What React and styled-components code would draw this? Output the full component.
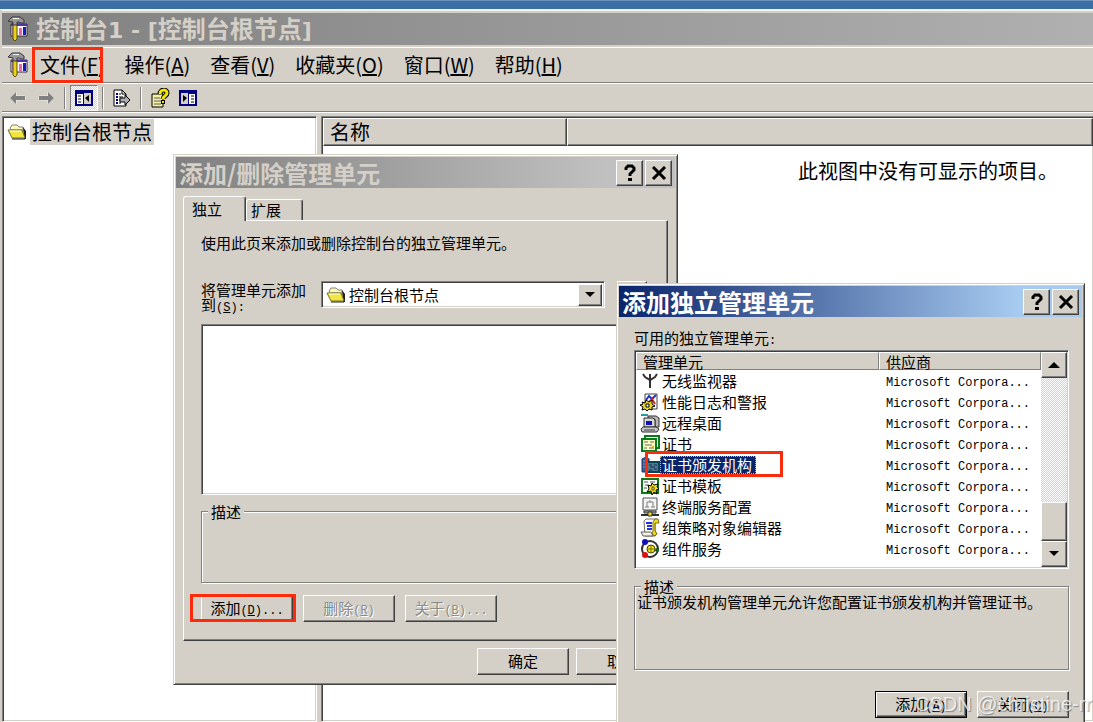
import React, { useState } from "react";
import styled, { createGlobalStyle, css } from "styled-components";

const face = "#d4d0c8";

const GlobalStyle = createGlobalStyle`
  * {
    box-sizing: border-box;
  }

  body {
    margin: 0;
    overflow: hidden;
    color: #000;
    font-family: "Noto Sans CJK SC", sans-serif;
    font-size: 15px;
  }

  button,
  select {
    font-family: inherit;
    color: inherit;
  }
`;

const raised = css`
  border: 1px solid;
  border-color: #fff #404040 #404040 #fff;
  box-shadow: inset -1px -1px #808080;
`;

const sunken = css`
  border: 1px solid;
  border-color: #808080 #fff #fff #808080;
  box-shadow: inset 1px 1px #404040, inset -1px -1px ${face};
`;

const Desktop = styled.div`
  position: relative;
  height: 100vh;
  padding-top: 8px;
  overflow: hidden;
  background: #3a6ea5;
  border-top: 1px solid #6d93bd;
`;

const ConsoleWindow = styled.main`
  display: flex;
  flex-direction: column;
  height: 100%;
  padding-top: 2px;
  background: ${face};
  border-top: 2px solid #f4f2ee;
  border-left: 2px solid ${face};
`;

const ConsoleTitle = styled.header`
  display: flex;
  align-items: center;
  gap: 8px;
  height: 32px;
  padding-left: 6px;
  color: ${face};
  background: linear-gradient(to right, #808080, #b0b0b0);
`;

const TitleText = styled.h1`
  margin: 0;
  font-size: 24px;
  line-height: 30px;
  font-weight: bold;
  white-space: nowrap;
`;

const TitleLatin = styled.span`
  font-family: "DejaVu Sans", sans-serif;
  font-size: 22px;
`;

const MenuBar = styled.nav`
  display: flex;
  align-items: center;
  height: 36px;
  margin-top: 2px;
  padding-left: 6px;
  border-top: 1px solid #fff;
  border-bottom: 1px solid #808080;
`;

const MenuItems = styled.div`
  display: flex;
  padding-left: 2px;
`;

const MenuButton = styled.button`
  position: relative;
  padding: 0 10px;
  border: 0;
  background: none;
  font-size: 20px;
  line-height: 30px;
  white-space: nowrap;
`;

const Marker = styled.span`
  position: absolute;
  inset: ${(props) => props.$inset || "-1px"};
  border: 3px solid #fb2c0c;
  pointer-events: none;
`;

const Toolbar = styled.div`
  display: flex;
  align-items: center;
  height: 29px;
  padding-left: 2px;
  border-top: 1px solid #fff;
  border-bottom: 1px solid #808080;
`;

const ToolButton = styled.button`
  display: flex;
  align-items: center;
  justify-content: center;
  width: 28px;
  height: 26px;
  padding: 0;
  border: 1px solid transparent;
  background: none;

  ${(props) =>
    props.$pressed &&
    css`
      border-color: #808080 #fff #fff #808080;
      background: repeating-conic-gradient(#fff 0 25%, ${face} 0 50%) 0 0 / 2px 2px;
    `}
`;

const ToolDivider = styled.span`
  width: 2px;
  height: 22px;
  margin: 0 4px;
  border-left: 1px solid #808080;
  border-right: 1px solid #fff;
`;

const Panes = styled.div`
  display: flex;
  flex: 1;
  gap: 4px;
  padding-top: 3px;
  border-top: 1px solid #fff;
`;

const TreePane = styled.aside`
  ${sunken}
  width: 315px;
  flex-shrink: 0;
  padding: 2px 4px;
  background: #fff;
`;

const TreeItem = styled.button`
  display: flex;
  align-items: center;
  gap: 3px;
  padding: 0;
  border: 0;
  background: none;
  font-size: 20px;
  line-height: 26px;
`;

const TreeLabel = styled.span`
  padding: 0 2px;
  background: ${face};
`;

const ResultPane = styled.section`
  ${sunken}
  flex: 1;
  border-right: 0;
  padding: 1px 0 0 1px;
  background: #fff;
`;

const ResultHeader = styled.div`
  display: flex;
  height: 28px;
  font-size: 20px;
  line-height: 26px;
`;

const ResultColumn = styled.div`
  ${raised}
  width: ${(props) => props.$width || "auto"};
  flex: ${(props) => (props.$width ? "none" : 1)};
  padding-left: 6px;
  background: ${face};
`;

const EmptyText = styled.p`
  margin: 10px 35px 0 0;
  text-align: right;
  font-size: 20px;
  line-height: 30px;
`;

const DialogFrame = styled.section`
  position: absolute;
  left: ${(props) => props.$x}px;
  top: ${(props) => props.$y}px;
  width: ${(props) => props.$width}px;
  padding: 2px;
  background: ${face};
  border: 1px solid;
  border-color: ${face} #404040 #404040 ${face};
  box-shadow: inset 1px 1px #fff, inset -1px -1px #808080;
  line-height: 16px;
`;

const DialogTitle = styled.header`
  display: flex;
  align-items: center;
  gap: 2px;
  height: 31px;
  padding: 0 3px;
  color: ${(props) => (props.$active ? "#fff" : face)};
  background: ${(props) =>
    props.$active
      ? "linear-gradient(to right, #0a246a, #a6caf0 86%)"
      : "linear-gradient(to right, #808080, #c0c0c0 86%)"};

  ${TitleText} {
    flex: 1;
  }
`;

const CaptionButton = styled.button`
  ${raised}
  display: flex;
  align-items: center;
  justify-content: center;
  width: 27px;
  height: 26px;
  padding: 0;
  background: ${face};
  color: #000;
`;

const SnapinBody = styled.div`
  padding: 8px 7px 7px;
`;

const Tabs = styled.div`
  display: flex;
  align-items: flex-end;
`;

const Tab = styled.button`
  position: relative;
  height: ${(props) => (props.$active ? 25 : 21)}px;
  width: ${(props) => (props.$active ? 63 : 57)}px;
  margin-bottom: ${(props) => (props.$active ? -1 : 0)}px;
  z-index: ${(props) => (props.$active ? 1 : 0)};
  padding: 0 0 0 ${(props) => (props.$active ? 8 : 4)}px;
  border: 1px solid;
  border-color: #fff #404040 transparent #fff;
  border-bottom: 0;
  border-radius: 3px 3px 0 0;
  box-shadow: inset -1px 0 #808080;
  background: ${face};
  font-size: 15px;
  line-height: 20px;
  text-align: left;
`;

const Sheet = styled.div`
  ${raised}
  padding: 14px 12px 18px 17px;
`;

const Paragraph = styled.p`
  margin: 0;
  white-space: nowrap;
`;

const ParentRow = styled.div`
  display: flex;
  height: 27px;
  margin: 30px 0 16px;
`;

const ParentLabel = styled.label`
  width: 120px;
  padding-top: 1px;
  font-size: 15px;
  line-height: 15px;
`;

const SelectBox = styled.div`
  ${sunken}
  display: flex;
  align-items: center;
  width: 284px;
  height: 27px;
  padding: 2px 2px 2px 4px;
  background: #fff;
`;

const SelectInput = styled.select`
  flex: 1;
  min-width: 0;
  padding: 0 0 0 3px;
  border: 0;
  outline: 0;
  appearance: none;
  background: none;
  font-size: 15px;
  line-height: 20px;
`;

const SmallButton = styled.button`
  ${raised}
  display: flex;
  align-items: center;
  justify-content: center;
  flex-shrink: 0;
  width: ${(props) => props.$width || 24}px;
  height: ${(props) => props.$height || 22}px;
  padding: 0;
  background: ${face};
`;

const UpButton = styled(SmallButton)`
  margin-left: 12px;
`;

const EmptyList = styled.div`
  ${sunken}
  height: 171px;
  background: #fff;
`;

const Group = styled.fieldset`
  min-width: 0;
  height: ${(props) => props.$height}px;
  margin: ${(props) => props.$top}px 0 0;
  padding: 0 2px;
  border: 1px solid #808080;
  box-shadow: inset 1px 1px #fff, 1px 1px #fff;
`;

const GroupLegend = styled.legend`
  margin-left: 4px;
  padding: 0 3px;
  background: ${face};
  line-height: 15px;
`;

const ButtonRow = styled.div`
  display: flex;
  justify-content: ${(props) => props.$align || "flex-start"};
  gap: ${(props) => props.$gap || 10}px;
  margin-top: ${(props) => props.$top}px;
`;

const PushButton = styled.button`
  ${raised}
  position: relative;
  width: 92px;
  height: 27px;
  padding: 0 0 2px;
  background: ${face};
  font-size: 15px;
  line-height: 22px;
  white-space: nowrap;

  &:disabled {
    color: #8a8a86;
    text-shadow: 1px 1px #fff;
  }

  ${(props) =>
    props.$default &&
    css`
      border-color: #000;
      box-shadow: inset 1px 1px #fff, inset -1px -1px #404040,
        inset -2px -2px #808080;
    `}
`;

const Mono = styled.span`
  font-family: "Liberation Mono", monospace;
  font-size: 12px;
  line-height: 1;
`;

const AddBody = styled.div`
  padding: 13px 13px 12px 15px;
`;

const ListBox = styled.div`
  ${sunken}
  display: flex;
  height: 219px;
  margin-top: 3px;
  padding: 1px;
  background: #fff;
`;

const SnapinTable = styled.table`
  flex: 1;
  align-self: flex-start;
  border-collapse: separate;
  border-spacing: 0;
  table-layout: fixed;
`;

const HeadCell = styled.th`
  width: ${(props) => props.$width || "auto"};
  height: 18px;
  padding: 0 0 0 6px;
  border: 1px solid;
  border-color: #fff #808080 #808080 #fff;
  background: ${face};
  font-weight: normal;
  line-height: 15px;
  text-align: left;
`;

const NameCell = styled.td`
  height: 21px;
  padding: 0 0 0 4px;
`;

const VendorCell = styled.td`
  padding: 0 0 0 7px;
  white-space: nowrap;
`;

const SnapinName = styled.div`
  position: relative;
  display: flex;
  align-items: center;
  width: 142px;
  height: 20px;
  white-space: nowrap;

  svg {
    flex-shrink: 0;
  }
`;

const SnapinLabel = styled.span`
  padding: 0 4px 0 2px;
  line-height: 18px;

  ${(props) =>
    props.$selected &&
    css`
      color: #fff;
      background: #0a246a;
      outline: 1px dotted #d8b060;
      outline-offset: -1px;
    `}
`;

const Scrollbar = styled.div`
  display: flex;
  flex-direction: column;
  width: 26px;
  background: repeating-conic-gradient(#fff 0 25%, ${face} 0 50%) 0 0 / 2px 2px;
`;

const Track = styled.div`
  flex: 1;
`;

const Thumb = styled.div`
  ${raised}
  height: 39px;
  background: ${face};
`;

const Watermark = styled.div`
  position: absolute;
  right: 1px;
  bottom: 4px;
  color: rgba(255, 255, 255, 0.75);
  font-family: "Liberation Sans", sans-serif;
  font-size: 20px;
  line-height: 28px;
  text-shadow: 1px 1px 1px rgba(90, 90, 90, 0.6);
  white-space: nowrap;
  pointer-events: none;
`;

function ConsoleIcon() {
  return (
    <svg width="20" height="26" viewBox="0 0 20 26" aria-hidden="true">
      <path d="M3 8h16v12H3z" fill="#fff" stroke="#303030" />
      <path d="M3 8h16v2H3z" fill="#5030a8" />
      <path d="M3 10h2v9H3z" fill="#b080e0" />
      <path d="M11 12h3v7h-3z" fill="#f060b0" />
      <path d="M15 11h3v8h-3z" fill="#1818c0" />
      <path d="M5 8h4v15l-2 2-2-2z" fill="#e8d420" stroke="#5a5000" />
      <path d="M4 1h8l4 3v3h-3l-2-1H9v3H5V6L0 5z" fill="#989898" stroke="#383838" />
      <path d="M5 2h6v1H5z" fill="#fff" />
    </svg>
  );
}

function FolderIcon() {
  return (
    <svg width="20" height="18" viewBox="0 0 20 18" aria-hidden="true">
      <path d="M3 5l2-3h5l2 2h4v3H4z" fill="#fff8b0" stroke="#808080" />
      <path d="M16 4l3 4v8h-2z" fill="#202020" />
      <path d="M1 7h14l3 8H5z" fill="#f2e63c" stroke="#707030" />
      <path d="M3 8h11" stroke="#fff" />
      <path d="M5 16h13" stroke="#202020" />
    </svg>
  );
}

function ArrowIcon({ flip }) {
  return (
    <svg width="18" height="14" viewBox="0 0 18 14" aria-hidden="true">
      <path
        d="M1 7l6-6v4h9v4H7v4z"
        fill="#808080"
        stroke="#f0eee8"
        strokeWidth="1"
        paintOrder="stroke"
        transform={flip ? "translate(18 0) scale(-1 1)" : undefined}
      />
    </svg>
  );
}

function TreePanelIcon({ flip }) {
  return (
    <svg width="18" height="16" viewBox="0 0 18 16" aria-hidden="true">
      <g transform={flip ? "translate(18 0) scale(-1 1)" : undefined}>
        <path d="M1 1h16v14H1z" fill="#fff" stroke="#000080" strokeWidth="2" />
        <path d="M1 1h16v3H1z" fill="#000080" />
        <path d="M9 3h7v11H9z" fill="#d4d0c8" />
        <path d="M8 3h1v11H8z" fill="#000080" />
        <path d="M3 6h3M3 9h3M3 12h3" stroke="#000" />
        <path d="M14 5v7l-4-4z" fill="#000" />
      </g>
    </svg>
  );
}

function ExportIcon() {
  return (
    <svg width="20" height="20" viewBox="0 0 20 20" aria-hidden="true">
      <path d="M2 2h8l4 4v12H2z" fill="#fff" stroke="#000" />
      <path d="M10 2v4h4" fill="none" stroke="#000" />
      <path d="M4 6h2M4 9h2M4 12h2M4 15h2" stroke="#000080" strokeWidth="2" />
      <path d="M7 6h2M7 9h4M7 12h2M7 15h2" stroke="#000" />
      <path d="M8 10h5V7l5 5-5 5v-3H8z" fill="#b0b0b0" stroke="#000" />
    </svg>
  );
}

function HelpIcon() {
  return (
    <svg width="20" height="20" viewBox="0 0 20 20" aria-hidden="true">
      <path d="M2 6h11v13H2z" fill="#f4f0a0" stroke="#000" />
      <path d="M4 10h6M4 13h7M4 16h7" stroke="#606060" />
      <path d="M10 6c0-5 7-5 7-1 0 3-4 3-4 6" fill="none" stroke="#000" strokeWidth="5" />
      <path d="M11 12h4v4h-4z" fill="#000" />
      <path d="M10 6c0-5 7-5 7-1 0 3-4 3-4 6" fill="none" stroke="#f4e400" strokeWidth="3" />
      <path d="M12 13h2v2h-2z" fill="#f4e400" />
    </svg>
  );
}

function QuestionIcon() {
  return (
    <svg width="14" height="18" viewBox="0 0 14 18" aria-hidden="true">
      <path d="M3 6V4l2-2h4l2 2v2L7 10v2" fill="none" stroke="#000" strokeWidth="3" />
      <path d="M5 14h4v3H5z" fill="#000" />
    </svg>
  );
}

function CloseIcon() {
  return (
    <svg width="16" height="14" viewBox="0 0 16 14" aria-hidden="true">
      <path d="M2 1l12 12M14 1L2 13" stroke="#000" strokeWidth="3" />
    </svg>
  );
}

function Caret({ up }) {
  return (
    <svg width="12" height="6" viewBox="0 0 12 6" aria-hidden="true">
      <path d={up ? "M0 6l6-6 6 6z" : "M1 0h10l-5 5z"} fill="#000" />
    </svg>
  );
}

// one 20x20 drawing per snap-in
const icons = {
  wireless: (
    <>
      <path d="M10 3v14" stroke="#303030" strokeWidth="2" />
      <path d="M3 3l2 3 5 3 5-3 2-3" fill="none" stroke="#303030" strokeWidth="2" />
    </>
  ),
  perf: (
    <>
      <path d="M5 2h12v15H5z" fill="#fff" stroke="#404040" />
      <path d="M6 8l3-4 3 3 4-4" fill="none" stroke="#2030d0" strokeWidth="2" />
      <path d="M9 10l3-3 3 5" fill="none" stroke="#e02020" strokeWidth="2" />
      <path d="M2 10l3 1 1-3 3 2 3-2v4l3 2-3 1v3l-3-1-2 2-2-2-3 1 1-3-3-2 3-1z" fill="#e8d820" stroke="#000" />
      <path d="M6 12h3v3H6z" fill="#fff" stroke="#000" />
    </>
  ),
  remote: (
    <>
      <path d="M1 2h7" stroke="#20a0a0" strokeWidth="2" />
      <path d="M8 3h8l3 2v9h-4V6H8z" fill="#b8b8b8" stroke="#303030" />
      <path d="M4 5h9l2 2v7H4z" fill="#d8d8d8" stroke="#303030" />
      <path d="M6 8h6v4H6z" fill="#1010c0" />
      <path d="M3 14h13l3 2-2 3H2l-1-3z" fill="#c8c8c8" stroke="#303030" />
      <path d="M4 17h11" stroke="#404040" />
    </>
  ),
  cert: (
    <>
      <path d="M5 2h14v12H5z" fill="#fff" stroke="#0a7a1a" strokeWidth="2" />
      <path d="M2 5h14v12H2z" fill="#fdf8c8" stroke="#0a7a1a" strokeWidth="2" />
      <path d="M4 8h4M10 8h4M5 11h7M4 14h3M9 14h5" stroke="#607050" />
      <path d="M12 12h2v2h-2z" fill="#d0b010" />
    </>
  ),
  ca: (
    <>
      <path d="M2 4l4-2 3 2v13H2z" fill="#3c5a90" stroke="#1c3468" />
      <path d="M3 6h4M3 9h4M3 12h4" stroke="#8098b8" />
      <path d="M7 7h12v10H7z" fill="#4c7890" stroke="#0a4450" strokeWidth="2" />
      <path d="M9 10h3M14 10h3M10 12h5M9 15h3M14 14h3" stroke="#183050" />
    </>
  ),
  template: (
    <>
      <path d="M2 3h16v14H2z" fill="#fff" stroke="#0a7a1a" strokeWidth="2" />
      <path d="M4 6h4M10 6h5M5 9h3M4 12h3" stroke="#505050" />
      <path d="M8 9l3 1 1-3 2 2 4-1-1 3 2 2-3 1 1 4-3-2-2 3-1-4-4 1 2-3z" fill="#f0e020" stroke="#000" />
      <path d="M12 11h2v3h-2z" fill="#fff" stroke="#604000" />
    </>
  ),
  terminal: (
    <>
      <path d="M3 1h14v12H3z" fill="#f4f4f4" stroke="#505050" />
      <path d="M10 3v2M7 7V5h6v2M7 7v3M13 7v3M5 10h4M11 10h4" fill="none" stroke="#808080" />
      <path d="M4 14h12v2H4z" fill="#c0c0c0" stroke="#303030" />
      <path d="M1 18h18" stroke="#303030" strokeWidth="2" />
      <path d="M8 15h4v4H8z" fill="#e8e020" stroke="#303030" />
    </>
  ),
  policy: (
    <>
      <path d="M4 3l2-2h11l-2 4v8l2 3-2 2H5z" fill="#fff" stroke="#707070" />
      <path d="M15 1h3l1 4h-4v8l2 3-3 2-2-3 1-2V4z" fill="#f0dc28" stroke="#807010" />
      <path d="M6 5h6M7 8h5M7 11h5" stroke="#2030e0" strokeWidth="2" />
      <path d="M1 14h10l2 4H3z" fill="#f0f0e0" stroke="#606060" />
    </>
  ),
  component: (
    <>
      <circle cx="10" cy="10" r="8" fill="#fff" stroke="#303030" strokeWidth="2" />
      <circle cx="11" cy="10" r="4" fill="#f0e420" stroke="#404000" />
      <path d="M11 7v6M8 10h6" stroke="#807000" />
      <circle cx="5" cy="3" r="3" fill="#1010c0" />
      <circle cx="5" cy="16" r="3" fill="#e01010" />
      <circle cx="17" cy="11" r="2" fill="#106020" />
    </>
  ),
};

const menus = [
  { name: "文件", accel: "F", marked: true },
  { name: "操作", accel: "A" },
  { name: "查看", accel: "V" },
  { name: "收藏夹", accel: "O" },
  { name: "窗口", accel: "W" },
  { name: "帮助", accel: "H" },
];

const snapins = [
  { name: "无线监视器", icon: "wireless" },
  { name: "性能日志和警报", icon: "perf" },
  { name: "远程桌面", icon: "remote" },
  { name: "证书", icon: "cert" },
  { name: "证书颁发机构", icon: "ca", marked: true },
  { name: "证书模板", icon: "template" },
  { name: "终端服务配置", icon: "terminal" },
  { name: "组策略对象编辑器", icon: "policy" },
  { name: "组件服务", icon: "component" },
];

function Accel({ letter, rest = "" }) {
  return (
    <Mono>
      (<u>{letter}</u>){rest}
    </Mono>
  );
}

function Caption({ title, active }) {
  return (
    <DialogTitle $active={active}>
      <TitleText as="h2">{title}</TitleText>
      <CaptionButton type="button" aria-label="帮助">
        <QuestionIcon />
      </CaptionButton>
      <CaptionButton type="button" aria-label="关闭">
        <CloseIcon />
      </CaptionButton>
    </DialogTitle>
  );
}

function SnapinDialog() {
  return (
    <DialogFrame $x={173} $y={153} $width={505}>
      <Caption title="添加/删除管理单元" />
      <SnapinBody>
        <Tabs role="tablist">
          <Tab type="button" role="tab" aria-selected="true" $active>
            独立
          </Tab>
          <Tab type="button" role="tab" aria-selected="false">
            扩展
          </Tab>
        </Tabs>
        <Sheet>
          <Paragraph>使用此页来添加或删除控制台的独立管理单元。</Paragraph>
          <ParentRow>
            <ParentLabel htmlFor="parent">
              将管理单元添加
              <br />到<Accel letter="S" rest=":" />
            </ParentLabel>
            <SelectBox>
              <FolderIcon />
              <SelectInput id="parent">
                <option>控制台根节点</option>
              </SelectInput>
              <SmallButton as="span">
                <Caret />
              </SmallButton>
            </SelectBox>
            <UpButton type="button" $width={30} $height={27} aria-label="向上" />
          </ParentRow>
          <EmptyList />
          <Group $top={9} $height={79}>
            <GroupLegend>描述</GroupLegend>
          </Group>
          <ButtonRow $top={12}>
            <PushButton type="button">
              添加
              <Accel letter="D" rest="..." />
              <Marker $inset="-2px -4px -1px -12px" />
            </PushButton>
            <PushButton type="button" disabled>
              删除
              <Accel letter="R" />
            </PushButton>
            <PushButton type="button" disabled>
              关于
              <Accel letter="B" rest="..." />
            </PushButton>
          </ButtonRow>
        </Sheet>
        <ButtonRow $top={7} $gap={7} $align="flex-end">
          <PushButton type="button">确定</PushButton>
          <PushButton type="button">取消</PushButton>
        </ButtonRow>
      </SnapinBody>
    </DialogFrame>
  );
}

function AddDialog() {
  const [selected, setSelected] = useState("ca");

  return (
    <DialogFrame $x={616} $y={282} $width={469}>
      <Caption title="添加独立管理单元" active />
      <AddBody>
        <Paragraph>
          可用的独立管理单元<Mono>:</Mono>
        </Paragraph>
        <ListBox>
          <SnapinTable>
            <thead>
              <tr>
                <HeadCell $width="60%">管理单元</HeadCell>
                <HeadCell>供应商</HeadCell>
              </tr>
            </thead>
            <tbody>
              {snapins.map((item) => (
                <tr key={item.icon} onClick={() => setSelected(item.icon)}>
                  <NameCell>
                    <SnapinName>
                      <svg width="20" height="20" viewBox="0 0 20 20" aria-hidden="true">
                        {icons[item.icon]}
                      </svg>
                      <SnapinLabel $selected={selected === item.icon}>
                        {item.name}
                      </SnapinLabel>
                      {item.marked && <Marker $inset="-4px -1px -2px 5px" />}
                    </SnapinName>
                  </NameCell>
                  <VendorCell>
                    <Mono>Microsoft Corpora...</Mono>
                  </VendorCell>
                </tr>
              ))}
            </tbody>
          </SnapinTable>
          <Scrollbar>
            <SmallButton type="button" $width={26} $height={26} aria-label="向上滚动">
              <Caret up />
            </SmallButton>
            <Track />
            <Thumb />
            <SmallButton type="button" $width={26} $height={26} aria-label="向下滚动">
              <Caret />
            </SmallButton>
          </Scrollbar>
        </ListBox>
        <Group $top={10} $height={91}>
          <GroupLegend>描述</GroupLegend>
          <Paragraph>证书颁发机构管理单元允许您配置证书颁发机构并管理证书。</Paragraph>
        </Group>
        <ButtonRow $top={21} $align="flex-end">
          <PushButton type="button" $default>
            添加
            <Accel letter="A" />
          </PushButton>
          <PushButton type="button">
            关闭
            <Accel letter="C" />
          </PushButton>
        </ButtonRow>
      </AddBody>
    </DialogFrame>
  );
}

export default function App() {
  return (
    <Desktop>
      <GlobalStyle />
      <ConsoleWindow>
        <ConsoleTitle>
          <ConsoleIcon />
          <TitleText>
            控制台<TitleLatin>1 - [</TitleLatin>控制台根节点<TitleLatin>]</TitleLatin>
          </TitleText>
        </ConsoleTitle>
        <MenuBar>
          <ConsoleIcon />
          <MenuItems>
            {menus.map((menu) => (
              <MenuButton type="button" key={menu.accel}>
                {menu.name}(<u>{menu.accel}</u>)
                {menu.marked && <Marker $inset="-3px 12px -3px 2px" />}
              </MenuButton>
            ))}
          </MenuItems>
        </MenuBar>
        <Toolbar>
          <ToolButton type="button" aria-label="后退">
            <ArrowIcon />
          </ToolButton>
          <ToolButton type="button" aria-label="前进">
            <ArrowIcon flip />
          </ToolButton>
          <ToolDivider />
          <ToolButton type="button" aria-label="显示树" $pressed>
            <TreePanelIcon />
          </ToolButton>
          <ToolDivider />
          <ToolButton type="button" aria-label="导出列表">
            <ExportIcon />
          </ToolButton>
          <ToolDivider />
          <ToolButton type="button" aria-label="帮助">
            <HelpIcon />
          </ToolButton>
          <ToolButton type="button" aria-label="操作窗格">
            <TreePanelIcon flip />
          </ToolButton>
        </Toolbar>
        <Panes>
          <TreePane>
            <TreeItem type="button">
              <FolderIcon />
              <TreeLabel>控制台根节点</TreeLabel>
            </TreeItem>
          </TreePane>
          <ResultPane>
            <ResultHeader>
              <ResultColumn $width="244px">名称</ResultColumn>
              <ResultColumn />
            </ResultHeader>
            <EmptyText>此视图中没有可显示的项目。</EmptyText>
          </ResultPane>
        </Panes>
      </ConsoleWindow>
      <SnapinDialog />
      <AddDialog />
      <Watermark>CSDN @christine-rr</Watermark>
    </Desktop>
  );
}
